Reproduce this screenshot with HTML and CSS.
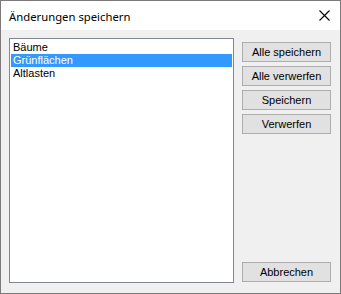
FILE: index.html
```html
<!DOCTYPE html>
<html>
<head>
<meta charset="utf-8">
<link rel="stylesheet" href="styles.css">
</head>
<body>
<div class="window">
  <div class="titlebar">
    <span class="title">Änderungen speichern</span>
    <svg class="close" width="11" height="11" viewBox="0 0 11 11"><path d="M0.5 0.5 L10.5 10.5 M10.5 0.5 L0.5 10.5" stroke="#000" stroke-width="1.1" fill="none"/></svg>
  </div>
  <div class="content">
    <div class="listbox">
      <div class="item">Bäume</div>
      <div class="item selected">Grünflächen</div>
      <div class="item">Altlasten</div>
    </div>
    <div class="buttons">
      <div class="btn">Alle speichern</div>
      <div class="btn">Alle verwerfen</div>
      <div class="btn">Speichern</div>
      <div class="btn">Verwerfen</div>
      <div class="btn cancel">Abbrechen</div>
    </div>
  </div>
</div>
</body>
</html>
```

FILE: styles.css
```css
html, body {
  margin: 0;
  padding: 0;
  background: #f0f0f0;
}
.window {
  width: 341px;
  height: 294px;
  box-sizing: border-box;
  border: 1px solid #7a7a7a;
  background: #f0f0f0;
  display: flex;
  flex-direction: column;
}
.titlebar {
  height: 29px;
  background: #ffffff;
  display: flex;
  align-items: center;
  justify-content: space-between;
  padding: 0 10px 0 8px;
  flex: none;
}
.title {
  font-family: "Noto Sans", sans-serif;
  font-size: 11.3px;
  color: #000;
  margin-top: 1px;
}
.close {
  display: block;
}
.content {
  flex: 1;
  display: flex;
  padding: 8px 9px 10px 8px;
}
.listbox {
  width: 225px;
  box-sizing: border-box;
  border: 1px solid #828790;
  background: #fff;
  padding: 2px 1px 1px 1px;
  font-family: "Liberation Sans", Arial, sans-serif;
  font-size: 11px;
}
.item {
  height: 13px;
  line-height: 13px;
  padding-left: 2px;
  color: #000;
}
.item.selected {
  background: #3399ff;
  color: #fff;
}
.buttons {
  margin-left: 8px;
  display: flex;
  flex-direction: column;
  gap: 4px;
  padding-top: 4px;
  padding-bottom: 1px;
  width: 89px;
}
.btn {
  height: 20px;
  box-sizing: border-box;
  border: 1px solid #adadad;
  background: #e1e1e1;
  font-family: "Liberation Sans", Arial, sans-serif;
  font-size: 11px;
  line-height: 18px;
  text-align: center;
  color: #000;
}
.btn.cancel {
  margin-top: auto;
}
```
